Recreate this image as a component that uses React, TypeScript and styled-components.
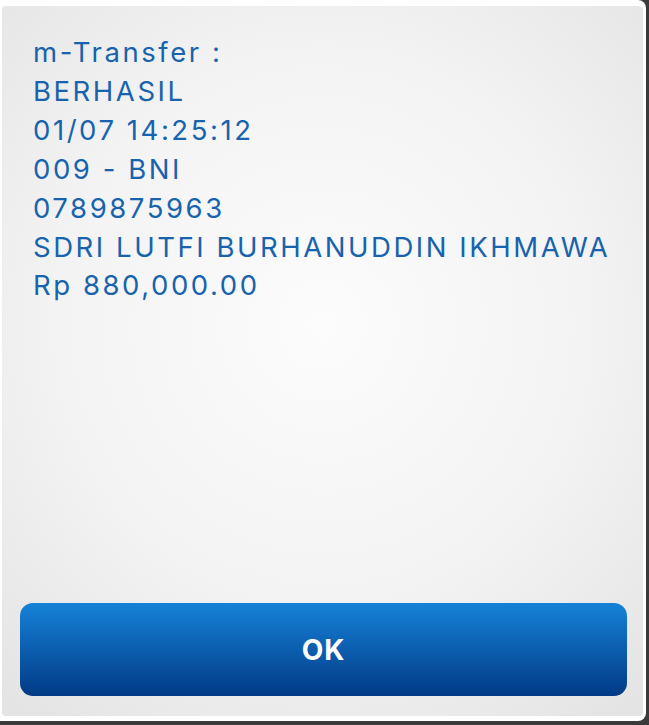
import React from "react";
import styled, { createGlobalStyle } from "styled-components";

const Global = createGlobalStyle`
  html, body { margin: 0; padding: 0; }
  body {
    background: #3a3a3a;
    width: 649px;
    height: 725px;
    overflow: hidden;
    font-family: Inter, "Liberation Sans", Arial, sans-serif;
  }
`;

const Frame = styled.div`
  width: 646px;
  height: 721px;
  box-sizing: border-box;
  background: #ffffff;
  border-radius: 0 8px 8px 0;
  padding: 6px 3px 5px 2px;
  display: flex;
`;

const Panel = styled.div`
  flex: 1;
  border-radius: 4px;
  background: radial-gradient(ellipse 75% 70% at 50% 45%, #fcfcfc 0%, #f3f3f3 55%, #e4e4e4 100%);
  display: flex;
  flex-direction: column;
  padding: 27px 16px 20px 18px;
  box-sizing: border-box;
`;

const Message = styled.div`
  flex: 1;
  padding-left: 13px;
  color: #1763ad;
  font-size: 27.5px;
  line-height: 38.9px;
  letter-spacing: 2.55px;
`;

const Line = styled.div`
  white-space: nowrap;
`;

const OkButton = styled.button`
  height: 93px;
  width: 100%;
  border: none;
  border-radius: 13px;
  background: linear-gradient(to bottom, #1582d6 0%, #0d62b3 45%, #023a85 100%);
  color: #ffffff;
  font-family: Inter, "Liberation Sans", Arial, sans-serif;
  font-weight: 700;
  font-size: 28px;
  letter-spacing: 1px;
  padding: 0;
  cursor: pointer;
`;

const lines = [
  "m-Transfer :",
  "BERHASIL",
  "01/07 14:25:12",
  "009 - BNI",
  "0789875963",
  "SDRI LUTFI BURHANUDDIN IKHMAWA",
  "Rp 880,000.00",
];

export default function App() {
  return (
    <>
      <Global />
      <Frame>
        <Panel>
          <Message>
            {lines.map((l) => (
              <Line key={l}>{l}</Line>
            ))}
          </Message>
          <OkButton>OK</OkButton>
        </Panel>
      </Frame>
    </>
  );
}
